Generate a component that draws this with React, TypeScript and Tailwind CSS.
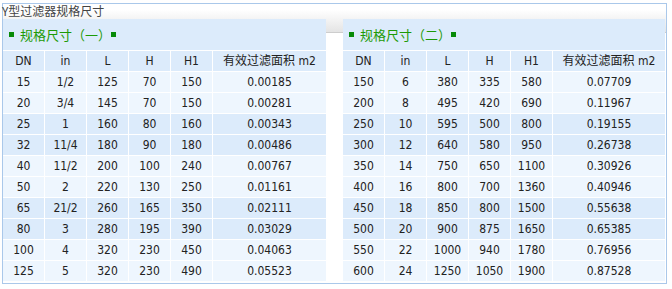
import React from "react";

type Row = [string, string, string, string, string, string];

const TABLE_ONE: Row[] = [
  ["15", "1/2", "125", "70", "150", "0.00185"],
  ["20", "3/4", "145", "70", "150", "0.00281"],
  ["25", "1", "160", "80", "160", "0.00343"],
  ["32", "11/4", "180", "90", "180", "0.00486"],
  ["40", "11/2", "200", "100", "240", "0.00767"],
  ["50", "2", "220", "130", "250", "0.01161"],
  ["65", "21/2", "260", "165", "350", "0.02111"],
  ["80", "3", "280", "195", "390", "0.03029"],
  ["100", "4", "320", "230", "450", "0.04063"],
  ["125", "5", "320", "230", "490", "0.05523"],
];

const TABLE_TWO: Row[] = [
  ["150", "6", "380", "335", "580", "0.07709"],
  ["200", "8", "495", "420", "690", "0.11967"],
  ["250", "10", "595", "500", "800", "0.19155"],
  ["300", "12", "640", "580", "950", "0.26738"],
  ["350", "14", "750", "650", "1100", "0.30926"],
  ["400", "16", "800", "700", "1360", "0.40946"],
  ["450", "18", "850", "800", "1500", "0.55638"],
  ["500", "20", "900", "875", "1650", "0.65385"],
  ["550", "22", "1000", "940", "1780", "0.76956"],
  ["600", "24", "1250", "1050", "1900", "0.87528"],
];

const HEADERS = ["DN", "in", "L", "H", "H1", "有效过滤面积 m2"];

// column template: five 41px columns, the area column takes the rest
const COLS = "grid grid-cols-[41px_41px_41px_41px_41px_1fr] gap-x-px h-[20px]";

const SpecPanel: React.FC<{ title: string; rows: Row[] }> = ({ title, rows }) => (
  <div className="flex flex-col gap-y-px">
    <div className="h-[31px] bg-[#dcebfb] flex items-center pl-[6px] text-[13px] text-[#1c9a06] font-['Noto_Sans_CJK_SC',sans-serif]">
      <span className="inline-block w-[5px] h-[5px] bg-[#078a07] mr-[6px]" />
      <span className="leading-none">规格尺寸（{title}）</span>
      <span className="inline-block w-[5px] h-[5px] bg-[#078a07]" />
    </div>
    <div className={COLS}>
      {HEADERS.map((h) => (
        <div key={h} className="bg-[#dcebfb] flex items-center justify-center whitespace-nowrap">
          {h}
        </div>
      ))}
    </div>
    {rows.map((r, i) => (
      <div key={r[0]} className={COLS}>
        {r.map((c, j) => (
          <div
            key={j}
            className={
              "flex items-center justify-center " +
              (Math.floor(i / 2) % 2 === 1 ? "bg-[#dcebfb]" : "bg-[#eef6fe]")
            }
          >
            {c}
          </div>
        ))}
      </div>
    ))}
  </div>
);

export default function App() {
  return (
    <div className="w-[672px] h-[289px] bg-white pt-[3px] pl-[2px] text-[12px] text-[#222] font-['DejaVu_Sans_Condensed','DejaVu_Sans','Noto_Sans_CJK_SC',sans-serif]">
      <div className="w-[665px] h-[281px] border border-[#aac8ea] bg-[linear-gradient(to_bottom,#ffffff_0px,#ffffff_6px,#e4e4e4_28px,#cdcdcd_28px,#cdcdcd_29px,#ffffff_29px)]">
        <div className="h-[16px] -ml-px -mt-px leading-[16px] text-[#444] font-['Noto_Sans_CJK_SC',sans-serif]">
          Y型过滤器规格尺寸
        </div>
        <div className="flex gap-[17px]">
          <div className="w-[323px]">
            <SpecPanel title="一" rows={TABLE_ONE} />
          </div>
          <div className="w-[322px]">
            <SpecPanel title="二" rows={TABLE_TWO} />
          </div>
        </div>
      </div>
    </div>
  );
}
